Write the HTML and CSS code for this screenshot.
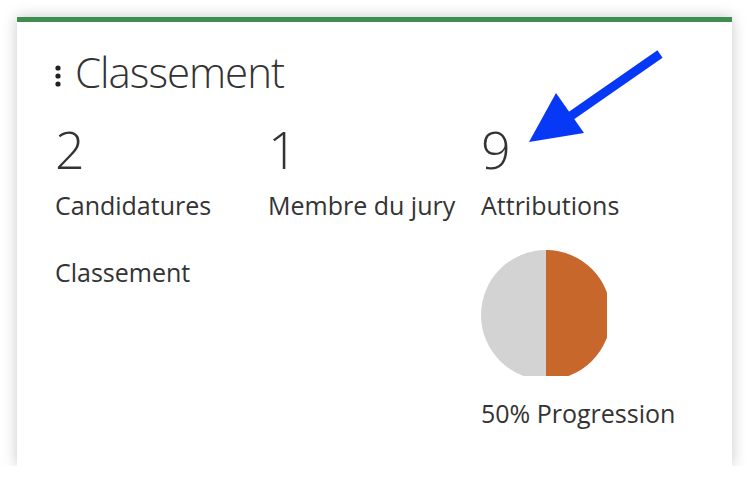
FILE: index.html
```html
<!DOCTYPE html>
<html lang="fr">
  <head>
    <meta charset="utf-8" />
    <title>Classement</title>
    <link rel="stylesheet" href="styles.css">
  </head>
  <body>
    <section class="carte">
      <h2 class="titre">
        <span class="poignee">
          <svg width="6" height="22" viewBox="0 0 6 22"><circle cx="3" cy="3" r="2.6"/><circle cx="3" cy="11" r="2.6"/><circle cx="3" cy="19" r="2.6"/></svg>
        </span>
        Classement
      </h2>

      <div class="stats">
        <div class="stat">
          <p class="nombre">2</p>
          <p class="libelle">Candidatures</p>
          <p class="libelle lien">Classement</p>
        </div>
        <div class="stat">
          <p class="nombre">1</p>
          <p class="libelle">Membre du jury</p>
        </div>
        <div class="stat">
          <p class="nombre">9</p>
          <p class="libelle">Attributions</p>
          <div class="camembert">
            <svg width="126" height="126" viewBox="0 0 126 126">
              <path d="M65 0 A65 65 0 0 0 65 130 Z" fill="#d3d3d3"/>
              <path d="M65 0 A65 65 0 0 1 65 130 Z" fill="#c8672c"/>
            </svg>
          </div>
          <p class="libelle progression">50% Progression</p>
        </div>
      </div>

      <!-- fleche d'annotation -->
      <svg class="fleche" width="150" height="110" viewBox="0 0 150 110">
        <line x1="145" y1="6" x2="50" y2="72" stroke="#0638f5" stroke-width="9"/>
        <polygon points="41,45 14,94 69,85" fill="#0638f5"/>
      </svg>
    </section>
  </body>
</html>
```

FILE: styles.css
```css
body {
  margin: 0;
  background-color: #ffffff;
  font-family: "Open Sans", sans-serif;
  color: #333333;
}

.carte {
  position: relative;
  box-sizing: border-box;
  width: 715px;
  height: 449px;
  margin: 17px 0 0 17px;
  padding: 23px 38px;
  background-color: #ffffff;
  border-top: 5px solid #3e8e52;
  box-shadow: 0 0 14px rgba(0, 0, 0, 0.22);
}

.titre {
  display: flex;
  align-items: center;
  gap: 14px;
  margin: 0;
  font-size: 42px;
  font-weight: 300;
  letter-spacing: -1px;
  line-height: 54px;
  color: #333333;
}

.poignee {
  display: flex;
  padding-top: 8px;
}

.poignee svg {
  fill: #222222;
}

.stats {
  display: grid;
  grid-template-columns: repeat(3, 1fr);
  margin-top: 18px;
}

.nombre {
  margin: 0;
  font-size: 52px;
  font-weight: 300;
  line-height: 64px;
}

.libelle {
  margin: 7px 0 0;
  font-size: 25px;
  line-height: 34px;
}

.lien {
  margin-top: 33px;
}

.camembert {
  margin-top: 28px;
  height: 126px;
}

.progression {
  margin-top: 20px;
}

.fleche {
  position: absolute;
  left: 498px;
  top: 26px;
}
```
